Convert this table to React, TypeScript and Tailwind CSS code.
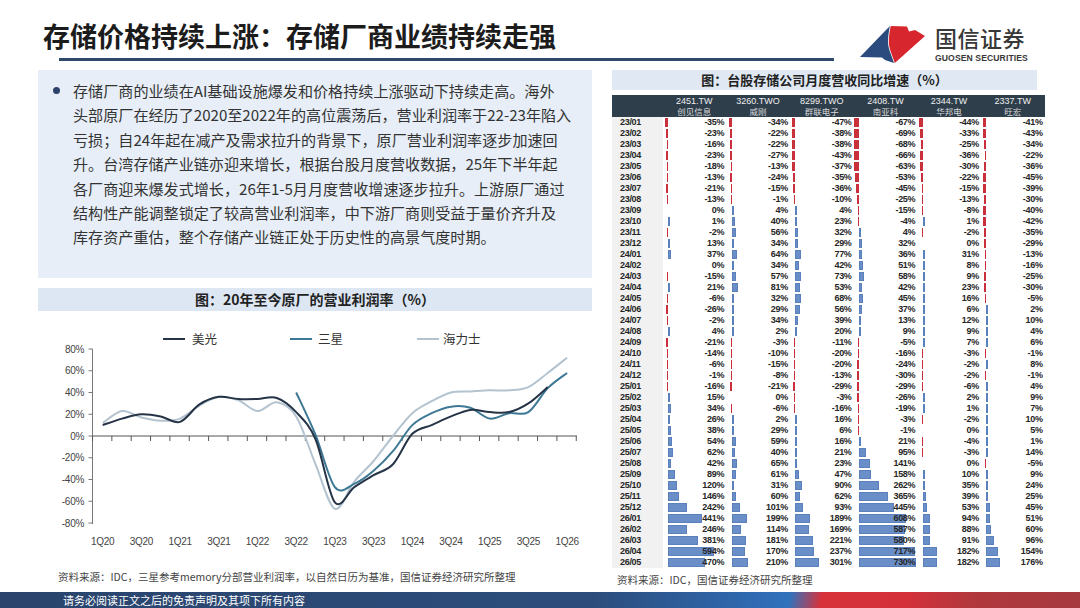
import React from "react";

const cjk = "font-['Noto_Sans_CJK_SC',sans-serif]";
const num = "font-['Liberation_Sans','Noto_Sans_CJK_SC',sans-serif]";

const bodyLines = [
  "存储厂商的业绩在AI基础设施爆发和价格持续上涨驱动下持续走高。海外",
  "头部原厂在经历了2020至2022年的高位震荡后，营业利润率于22-23年陷入",
  "亏损；自24年起在减产及需求拉升的背景下，原厂营业利润率逐步加速回",
  "升。台湾存储产业链亦迎来增长，根据台股月度营收数据，25年下半年起",
  "各厂商迎来爆发式增长，26年1-5月月度营收增速逐步拉升。上游原厂通过",
  "结构性产能调整锁定了较高营业利润率，中下游厂商则受益于量价齐升及",
  "库存资产重估，整个存储产业链正处于历史性的高景气度时期。",
];

const companies = [
  { code: "2451.TW", name: "创见信息" },
  { code: "3260.TWO", name: "威刚" },
  { code: "8299.TWO", name: "群联电子" },
  { code: "2408.TW", name: "南亚科" },
  { code: "2344.TW", name: "华邦电" },
  { code: "2337.TW", name: "旺宏" },
];

const rows: [string, number[]][] = [
  ["23/01", [-35, -34, -47, -67, -44, -41]],
  ["23/02", [-23, -22, -38, -69, -33, -43]],
  ["23/03", [-16, -22, -38, -68, -25, -34]],
  ["23/04", [-23, -27, -43, -66, -36, -22]],
  ["23/05", [-18, -13, -37, -63, -30, -36]],
  ["23/06", [-13, -24, -35, -53, -22, -45]],
  ["23/07", [-21, -15, -36, -45, -15, -39]],
  ["23/08", [-13, -1, -10, -25, -13, -30]],
  ["23/09", [0, 4, 4, -15, -8, -40]],
  ["23/10", [1, 40, 23, -4, 1, -42]],
  ["23/11", [-2, 56, 32, 4, -2, -35]],
  ["23/12", [13, 34, 29, 32, 0, -29]],
  ["24/01", [37, 64, 77, 36, 31, -13]],
  ["24/02", [0, 34, 42, 51, 8, -16]],
  ["24/03", [-15, 57, 73, 58, 9, -25]],
  ["24/04", [21, 81, 53, 42, 23, -30]],
  ["24/05", [-6, 32, 68, 45, 16, -5]],
  ["24/06", [-26, 29, 56, 37, 6, 2]],
  ["24/07", [-2, 34, 39, 13, 12, 10]],
  ["24/08", [4, 2, 20, 9, 9, 4]],
  ["24/09", [-21, -3, -11, -5, 7, 6]],
  ["24/10", [-14, -10, -20, -16, -3, -1]],
  ["24/11", [-6, -15, -20, -24, -2, 8]],
  ["24/12", [-1, -8, -13, -30, -2, -1]],
  ["25/01", [-16, -21, -29, -29, -6, 4]],
  ["25/02", [15, 0, -3, -26, 2, 9]],
  ["25/03", [34, -6, -16, -19, 1, 7]],
  ["25/04", [26, 2, 16, -3, -2, 10]],
  ["25/05", [38, 29, 6, -1, 0, 5]],
  ["25/06", [54, 59, 16, 21, -4, 1]],
  ["25/07", [62, 40, 21, 95, -3, 14]],
  ["25/08", [42, 65, 23, 141, 0, -5]],
  ["25/09", [89, 61, 47, 158, 10, 9]],
  ["25/10", [120, 31, 90, 262, 35, 24]],
  ["25/11", [146, 60, 62, 365, 39, 25]],
  ["25/12", [242, 101, 93, 445, 53, 45]],
  ["26/01", [441, 199, 189, 608, 94, 51]],
  ["26/02", [246, 114, 169, 587, 88, 60]],
  ["26/03", [381, 181, 221, 580, 91, 96]],
  ["26/04", [594, 170, 237, 717, 182, 154]],
  ["26/05", [470, 210, 301, 730, 182, 176]],
];

// quarterly operating margin, 1Q20 .. 1Q26 (null = no data)
const micron = [10, 16, 20, 18, 13, 29, 36, 34, 34, 35, 22, -3, -61, -47, -36, -26, 2, 10, 18, 24, 22, 22, 30, 45];
const samsung: (number | null)[] = [
  null, null, null, null, null, null, null, null, null, null,
  40, 1, -47, -44, -32, -14, 10, 21, 27, 26, 16, 21, 22, 44, 58,
];
const hynix = [12, 23, 17, 14, 16, 28, 36, 33, 23, 31, 18, -26, -67, -42, -23, 0, 21, 32, 40, 41, 42, 42, 45, 58, 72];

const qLabels = ["1Q20", "3Q20", "1Q21", "3Q21", "1Q22", "3Q22", "1Q23", "3Q23", "1Q24", "3Q24", "1Q25", "3Q25", "1Q26"];

const px = (i: number) => 64.7 + i * 19.35;
const py = (v: number) => 125 - v * 1.0875;

function smoothPath(values: (number | null)[]) {
  const pts: [number, number][] = [];
  values.forEach((v, i) => {
    if (v !== null) pts.push([px(i), py(v)]);
  });
  let d = `M${pts[0][0]},${pts[0][1]}`;
  for (let i = 0; i < pts.length - 1; i++) {
    const p0 = pts[i - 1] || pts[i];
    const p1 = pts[i];
    const p2 = pts[i + 1];
    const p3 = pts[i + 2] || p2;
    const c1x = p1[0] + (p2[0] - p0[0]) / 6;
    const c1y = p1[1] + (p2[1] - p0[1]) / 6;
    const c2x = p2[0] - (p3[0] - p1[0]) / 6;
    const c2y = p2[1] - (p3[1] - p1[1]) / 6;
    d += ` C${c1x},${c1y} ${c2x},${c2y} ${p2[0]},${p2[1]}`;
  }
  return d;
}

function Logo() {
  return (
    <div className="flex items-start pt-[20px]">
      <svg width="84" height="52" viewBox="0 0 84 52">
        <path
          d="M8,37 L33,11 L38,6 C37,10 36,16 36,22 C36,28 39,34 42,43 L33,40 L30,37.5 Z"
          fill="#2b4a7d"
        />
        <path
          d="M38.8,6 L55,6.5 L57,11.5 L63,10 L73,16 L42.8,43 C39.8,34 36.8,28 36.8,22 C36.8,16 37.8,10 38.8,6 Z"
          fill="#d8262f"
        />
      </svg>
      <div className={`-ml-[1px] pt-[4px] flex flex-col items-start ${cjk}`}>
        <div className="text-[22px] leading-[26px] font-medium text-[#383838] tracking-[0.5px]">国信证券</div>
        <div className={`${num} mt-[3px] text-[8.6px] leading-[10px] font-bold text-[#383838] tracking-[0.1px]`}>
          GUOSEN SECURITIES
        </div>
      </div>
    </div>
  );
}

function ProfitChart() {
  const yTicks = [80, 60, 40, 20, 0, -20, -40, -60, -80];
  return (
    <svg width="554" height="260" viewBox="0 0 554 260" className="block">
      {/* legend */}
      <line x1="125" y1="28" x2="147" y2="28" stroke="#263447" strokeWidth="2" />
      <text x="154" y="32.5" fontSize="12.5" fill="#333" fontFamily="Noto Sans CJK SC, sans-serif">美光</text>
      <line x1="252" y1="28" x2="274" y2="28" stroke="#3d7895" strokeWidth="2" />
      <text x="280" y="32.5" fontSize="12.5" fill="#333" fontFamily="Noto Sans CJK SC, sans-serif">三星</text>
      <line x1="379" y1="28" x2="401" y2="28" stroke="#b3c3cf" strokeWidth="2" />
      <text x="405" y="32.5" fontSize="12.5" fill="#333" fontFamily="Noto Sans CJK SC, sans-serif">海力士</text>

      {/* axes */}
      <line x1="54.5" y1="38" x2="54.5" y2="213" stroke="#777" strokeWidth="1" />
      {yTicks.map((t) => (
        <g key={t}>
          <line x1="50.5" y1={py(t)} x2="54.5" y2={py(t)} stroke="#777" strokeWidth="1" />
          <text
            x="46"
            y={py(t) + 3.5}
            textAnchor="end"
            fontSize="10"
            fill="#444"
            letterSpacing="-0.3"
            fontFamily="Liberation Sans, sans-serif"
          >
            {t}%
          </text>
        </g>
      ))}
      <line x1="54.5" y1="125" x2="539" y2="125" stroke="#555" strokeWidth="1" />
      {Array.from({ length: 26 }).map((_, k) => (
        <line key={k} x1={54.5 + k * 19.35} y1="125" x2={54.5 + k * 19.35} y2="130" stroke="#555" strokeWidth="1" />
      ))}
      {qLabels.map((l, k) => (
        <text
          key={l}
          x={px(k * 2)}
          y="234"
          textAnchor="middle"
          fontSize="10"
          fill="#444"
          letterSpacing="-0.3"
          fontFamily="Liberation Sans, sans-serif"
        >
          {l}
        </text>
      ))}

      {/* series */}
      <path d={smoothPath(hynix)} fill="none" stroke="#b3c3cf" strokeWidth="2" />
      <path d={smoothPath(samsung)} fill="none" stroke="#3d7895" strokeWidth="2" />
      <path d={smoothPath(micron)} fill="none" stroke="#263447" strokeWidth="2" />
    </svg>
  );
}

function Bar({ v }: { v: number }) {
  if (v === 0) return null;
  const w = Math.max(1, Math.abs(v) * 0.078);
  const style = v > 0 ? { left: 5.5, width: w } : { left: 5.5 - w, width: w };
  return (
    <span
      className={`absolute top-[1px] bottom-[1px] ${
        v > 0 ? "bg-[#6a8fc8] border border-[#5b81bd]" : "bg-[#c9303b]"
      }`}
      style={style}
    />
  );
}

function RevenueTable() {
  return (
    <div className={`${num} w-[433px]`}>
      <div className="grid grid-cols-[50.5px_repeat(6,63.7px)] h-[22px] bg-[#2f3e4b] text-white">
        <div />
        {companies.map((c) => (
          <div key={c.code} className="flex flex-col items-center justify-center leading-[10px]">
            <span className="text-[9px] text-[#f0f0f0]">{c.code}</span>
            <span className={`${cjk} text-[8.5px] text-[#d6d6d6]`}>{c.name}</span>
          </div>
        ))}
      </div>
      {rows.map(([label, vals]) => (
        <div key={label} className="grid grid-cols-[50.5px_repeat(6,63.7px)] h-[11px] text-[9px] leading-[11px] font-bold text-[#262626]">
          <div className="bg-[#f1f1f1] pl-[8px] tracking-[-0.3px]">{label}</div>
          {vals.map((v, i) => (
            <div key={i} className="relative text-right pr-[2px] tracking-[-0.3px]">
              <Bar v={v} />
              <span className="relative">{v}%</span>
            </div>
          ))}
        </div>
      ))}
    </div>
  );
}

export default function App() {
  return (
    <div className={`w-[1080px] h-[608px] bg-white overflow-hidden flex flex-col ${cjk}`}>
      {/* header */}
      <header className="h-[70px] flex">
        <div className="w-[852px] flex flex-col">
          <h1 className="pl-[43px] pt-[19px] text-[27px] leading-[34px] font-bold text-[#1c1c1c] whitespace-nowrap">
            存储价格持续上涨：存储厂商业绩持续走强
          </h1>
          <div className="ml-[59px] mt-[5px] w-[775px] h-[3px] bg-[#2d4a6b]" />
        </div>
        <Logo />
      </header>

      <main className="flex-1 flex">
        {/* left column */}
        <section className="ml-[38px] w-[554px] flex flex-col">
          <div className="h-[208px] bg-[#e7eef7] pt-[8px] flex">
            <div className="w-[35px] flex justify-center pt-[8.5px] pl-[2px]">
              <span className="w-[7px] h-[7px] rounded-full bg-[#2d426a]" />
            </div>
            <div className="text-[15.1px] leading-[24.4px] text-[#333]">
              {bodyLines.map((l) => (
                <div key={l} className="whitespace-nowrap">{l}</div>
              ))}
            </div>
          </div>
          <div className="mt-[10px] h-[23px] bg-[#dde7f3] flex items-center justify-center text-[14px] font-bold text-[#222]">
            图：20年至今原厂的营业利润率（%）
          </div>
          <ProfitChart />
          <div className="pl-[20px] text-[10.5px] leading-[12px] text-[#444] whitespace-nowrap">
            资料来源：IDC，三星参考memory分部营业利润率，以自然日历为基准，国信证券经济研究所整理
          </div>
        </section>

        {/* right column */}
        <section className="ml-[20px] w-[433px] flex flex-col">
          <div className="w-[425px] h-[20px] bg-[#dfe8f3] flex items-center justify-center text-[13px] font-bold text-[#222]">
            图：台股存储公司月度营收同比增速（%）
          </div>
          <div className="mt-[5px]">
            <RevenueTable />
          </div>
          <div className="mt-[6px] pl-[5px] text-[10.5px] leading-[12px] text-[#444] whitespace-nowrap">
            资料来源：IDC，国信证券经济研究所整理
          </div>
        </section>
      </main>

      {/* footer */}
      <footer className="h-[16px] flex items-center bg-[linear-gradient(100deg,#2a446c_0%,#2c4d7c_55%,#2f6ab2_70%,#3172bd_73%,#d7323a_76%,#d3303a_84%,#b1383d_90%,#a63a3f_100%)]">
        <span className="pl-[63px] text-[11px] leading-[16px] text-white whitespace-nowrap">
          请务必阅读正文之后的免责声明及其项下所有内容
        </span>
      </footer>
    </div>
  );
}
